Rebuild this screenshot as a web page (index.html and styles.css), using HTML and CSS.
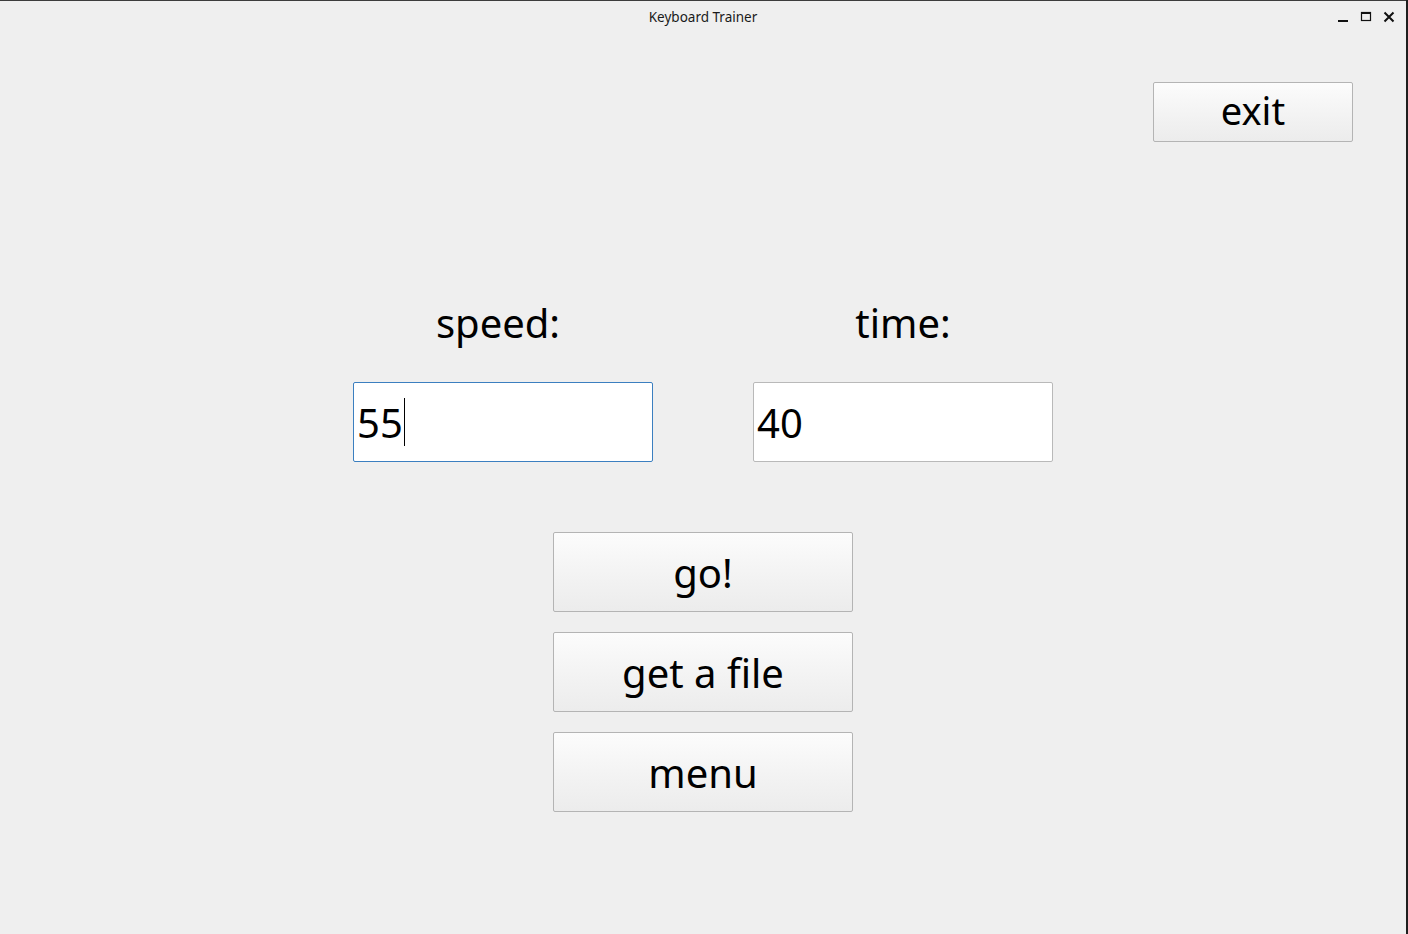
FILE: index.html
```html
<!DOCTYPE html>
<html lang="en">
<head>
<meta charset="utf-8">
<title>Keyboard Trainer</title>
<link rel="stylesheet" href="styles.css">
</head>
<body>
<div class="window">
  <header class="titlebar">
    <div class="tb-spacer"></div>
    <div class="tb-title">Keyboard Trainer</div>
    <div class="tb-controls">
      <svg class="tb-icon" width="12" height="12" viewBox="0 0 12 12"><rect x="1" y="9" width="10" height="2" fill="#111"/></svg>
      <svg class="tb-icon" width="12" height="12" viewBox="0 0 12 12"><rect x="1.5" y="1.5" width="9" height="8" fill="none" stroke="#111" stroke-width="1.2"/><rect x="1" y="1" width="10" height="2" fill="#111"/></svg>
      <svg class="tb-icon" width="12" height="12" viewBox="0 0 12 12"><path d="M1.5 1.5 L10.5 10.5 M10.5 1.5 L1.5 10.5" stroke="#111" stroke-width="2" fill="none"/></svg>
    </div>
  </header>
  <main class="content">
    <div class="exit-row">
      <button class="btn btn-exit">exit</button>
    </div>
    <div class="fields">
      <div class="field">
        <div class="label">speed:</div>
        <div class="input focused"><span class="value">55</span><span class="caret"></span></div>
      </div>
      <div class="field">
        <div class="label">time:</div>
        <div class="input"><span class="value">40</span></div>
      </div>
    </div>
    <div class="actions">
      <button class="btn">go!</button>
      <button class="btn">get a file</button>
      <button class="btn">menu</button>
    </div>
  </main>
</div>
</body>
</html>
```

FILE: styles.css
```css
html, body {
  margin: 0;
  padding: 0;
  background: #efefef;
}

.window {
  width: 1406px;
  height: 934px;
  background: #efefef;
  border-right: 2px solid #1e1e1e;
  font-family: "Noto Sans", "DejaVu Sans", sans-serif;
  color: #000;
  display: flex;
  flex-direction: column;
}

.titlebar {
  height: 33px;
  border-top: 1px solid #3c3c3c;
  display: grid;
  grid-template-columns: 1fr auto 1fr;
  align-items: center;
}

.tb-title {
  font-size: 13.5px;
  color: #1a1a1a;
  line-height: 16px;
  padding-bottom: 2px;
}

.tb-controls {
  justify-self: end;
  display: flex;
  align-items: center;
  gap: 11px;
  padding-right: 11px;
  padding-bottom: 1px;
}

.tb-icon {
  display: block;
}

.content {
  display: flex;
  flex-direction: column;
  align-items: center;
}

.exit-row {
  align-self: stretch;
  display: flex;
  justify-content: flex-end;
  padding-top: 48px;
  padding-right: 53px;
}

.btn {
  width: 300px;
  height: 80px;
  border: 1px solid #b4b4b4;
  border-radius: 2px;
  background: linear-gradient(to bottom, #fcfcfc 0%, #f2f2f2 60%, #ececec 100%);
  font-family: "Noto Sans", "DejaVu Sans", sans-serif;
  font-size: 40px;
  color: #000;
  padding: 0;
  margin: 0;
  display: flex;
  align-items: center;
  justify-content: center;
  box-sizing: border-box;
}

.btn-exit {
  width: 200px;
  height: 60px;
  font-size: 38px;
  padding-bottom: 4px;
}

.fields {
  margin-top: 157px;
  display: flex;
  gap: 100px;
}

.field {
  display: flex;
  flex-direction: column;
  align-items: center;
  gap: 35px;
}

.label {
  font-size: 40px;
  line-height: 48px;
  height: 48px;
  padding-right: 10px;
}

.field + .field .label {
  padding-right: 0;
}

.input {
  width: 300px;
  height: 80px;
  box-sizing: border-box;
  background: #fff;
  border: 1px solid #b9b9b9;
  border-radius: 2px;
  display: flex;
  align-items: center;
  padding: 0 0 0 3px;
  font-size: 40px;
}

.input.focused {
  border-color: #3b7fc0;
}

.value {
  line-height: 48px;
  padding-top: 2px;
}

.caret {
  width: 1px;
  height: 48px;
  background: #000;
  margin-left: 1px;
}

.actions {
  margin-top: 70px;
  display: flex;
  flex-direction: column;
  gap: 20px;
}
```
